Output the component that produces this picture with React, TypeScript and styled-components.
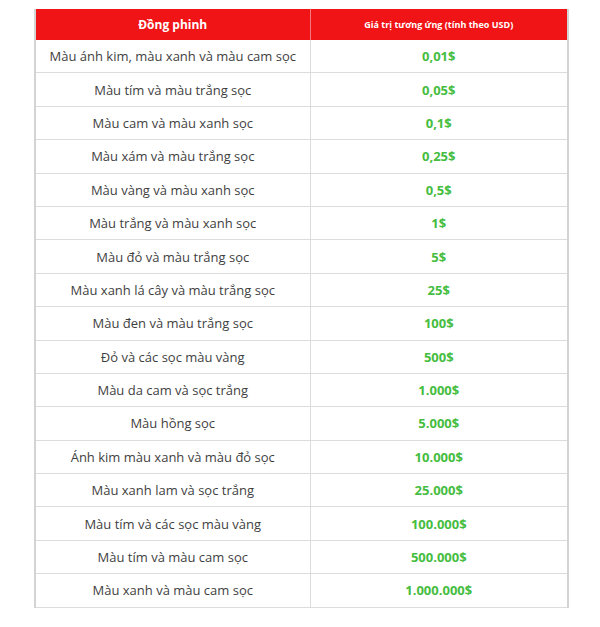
import { createGlobalStyle } from 'styled-components'
import styled from 'styled-components'

const GlobalStyle = createGlobalStyle`
  html, body {
    margin: 0;
    padding: 0;
    background: #ffffff;
  }
  body {
    font-family: 'Open Sans', 'Noto Sans', sans-serif;
  }
`

const rows: [string, string][] = [
  ['Màu ánh kim, màu xanh và màu cam sọc', '0,01$'],
  ['Màu tím và màu trắng sọc', '0,05$'],
  ['Màu cam và màu xanh sọc', '0,1$'],
  ['Màu xám và màu trắng sọc', '0,25$'],
  ['Màu vàng và màu xanh sọc', '0,5$'],
  ['Màu trắng và màu xanh sọc', '1$'],
  ['Màu đỏ và màu trắng sọc', '5$'],
  ['Màu xanh lá cây và màu trắng sọc', '25$'],
  ['Màu đen và màu trắng sọc', '100$'],
  ['Đỏ và các sọc màu vàng', '500$'],
  ['Màu da cam và sọc trắng', '1.000$'],
  ['Màu hồng sọc', '5.000$'],
  ['Ánh kim màu xanh và màu đỏ sọc', '10.000$'],
  ['Màu xanh lam và sọc trắng', '25.000$'],
  ['Màu tím và các sọc màu vàng', '100.000$'],
  ['Màu tím và màu cam sọc', '500.000$'],
  ['Màu xanh và màu cam sọc', '1.000.000$'],
]

const Page = styled.div`
  padding: 9px 0 0 34px;
`

const Table = styled.table`
  width: 535px;
  border-collapse: collapse;
  border-left: 2px solid #d4d4d4;
  border-right: 2px solid #d4d4d4;
  table-layout: fixed;
`

const HeadCell = styled.th<{ $small?: boolean }>`
  background: #f01416;
  color: #ffffff;
  height: 31px;
  padding: 0;
  font-weight: 700;
  font-size: ${(p) => (p.$small ? '9px' : '12px')};
  text-align: center;
  border-right: 1px solid #f47b7b;
  &:last-child {
    border-right: none;
  }
`

const Cell = styled.td<{ $value?: boolean }>`
  height: 32.4px;
  padding: 0;
  text-align: center;
  border-bottom: 1px solid #dcdcdc;
  border-right: 1px solid #dcdcdc;
  font-size: 13px;
  color: ${(p) => (p.$value ? '#45bd3f' : '#3f3f3f')};
  font-weight: ${(p) => (p.$value ? 700 : 400)};
  &:last-child {
    border-right: none;
  }
`

export default function App() {
  return (
    <Page>
      <GlobalStyle />
      <Table>
        <colgroup>
          <col style={{ width: 275 }} />
          <col />
        </colgroup>
        <thead>
          <tr>
            <HeadCell>Đồng phinh</HeadCell>
            <HeadCell $small>Giá trị tương ứng (tính theo USD)</HeadCell>
          </tr>
        </thead>
        <tbody>
          {rows.map(([name, value]) => (
            <tr key={name}>
              <Cell>{name}</Cell>
              <Cell $value>{value}</Cell>
            </tr>
          ))}
        </tbody>
      </Table>
    </Page>
  )
}
